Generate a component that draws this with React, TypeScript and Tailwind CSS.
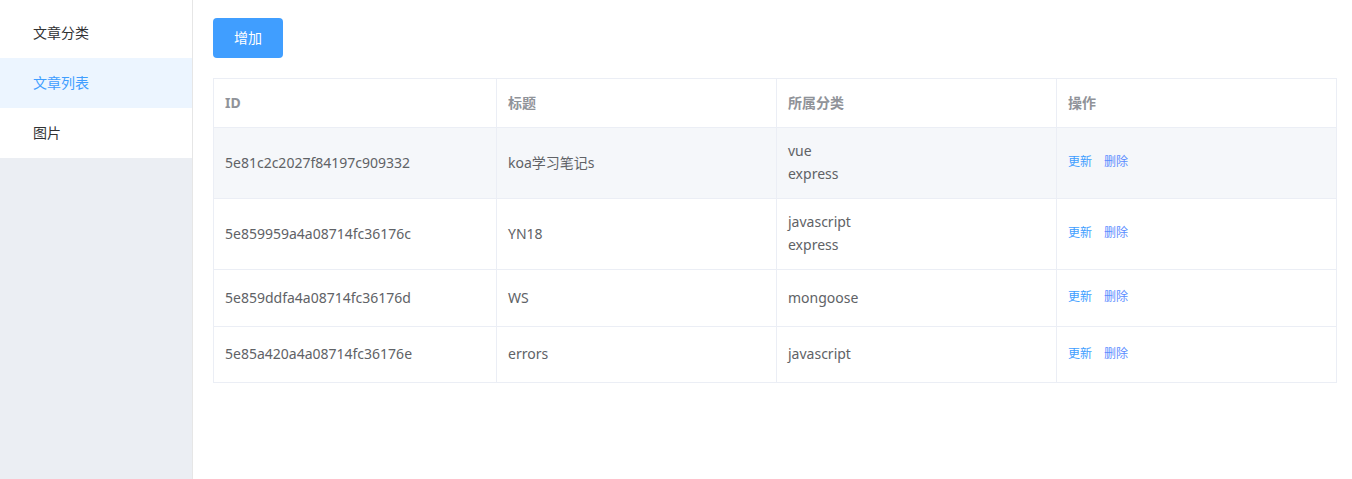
import React from "react";

const rows = [
  { id: "5e81c2c2027f84197c909332", title: "koa学习笔记s", cats: ["vue", "express"], h: "h-[71px]", bg: "bg-[#f5f7fa]" },
  { id: "5e859959a4a08714fc36176c", title: "YN18", cats: ["javascript", "express"], h: "h-[71px]", bg: "bg-white" },
  { id: "5e859ddfa4a08714fc36176d", title: "WS", cats: ["mongoose"], h: "h-[57px]", bg: "bg-white" },
  { id: "5e85a420a4a08714fc36176e", title: "errors", cats: ["javascript"], h: "h-[55px]", bg: "bg-white" },
];

const font = { fontFamily: '"Noto Sans", "Noto Sans CJK SC", sans-serif' };

export default function App() {
  return (
    <div className="flex h-[479px] w-[1352px] bg-white" style={font}>
      <aside className="flex w-[193px] shrink-0 flex-col border-r border-[#e6e6e6] bg-[#ebeef3]">
        <div className="bg-white pt-[8px]">
          <div className="flex h-[50px] items-center pb-[2px] pl-[33px] text-[14px] text-[#303133]">文章分类</div>
          <div className="flex h-[50px] items-center bg-[#ecf5ff] pb-[2px] pl-[33px] text-[14px] text-[#409eff]">文章列表</div>
          <div className="flex h-[50px] items-center pb-[2px] pl-[33px] text-[14px] text-[#303133]">图片</div>
        </div>
      </aside>
      <main className="flex-1 pl-[20px] pr-[15px] pt-[18px]">
        <button className="flex h-[40px] w-[70px] items-center justify-center rounded-[4px] bg-[#409eff] pb-[2px] text-[14px] text-white">
          增加
        </button>
        <div className="mt-[20px] border border-[#ebeef5]">
          <div className="grid h-[49px] grid-cols-[283px_280px_280px_1fr] border-b border-[#ebeef5] text-[14px] font-bold text-[#909399]">
            <div className="flex items-center border-r border-[#ebeef5] pb-[2px] pl-[11px]">ID</div>
            <div className="flex items-center border-r border-[#ebeef5] pb-[2px] pl-[11px]">标题</div>
            <div className="flex items-center border-r border-[#ebeef5] pb-[2px] pl-[11px]">所属分类</div>
            <div className="flex items-center pb-[2px] pl-[11px]">操作</div>
          </div>
          {rows.map((r, i) => (
            <div
              key={r.id}
              className={`grid grid-cols-[283px_280px_280px_1fr] text-[14px] text-[#606266] ${r.h} ${r.bg} ${i < rows.length - 1 ? "border-b border-[#ebeef5]" : ""}`}
            >
              <div className="flex items-center border-r border-[#ebeef5] pb-[2px] pl-[11px]">{r.id}</div>
              <div className="flex items-center border-r border-[#ebeef5] pb-[2px] pl-[11px]">{r.title}</div>
              <div className="flex flex-col justify-center border-r border-[#ebeef5] pb-[2px] pl-[11px] leading-[23px]">
                {r.cats.map((c) => (
                  <span key={c}>{c}</span>
                ))}
              </div>
              <div className="flex items-center gap-[12px] pb-[2px] pl-[11px] text-[12px]">
                <span className="text-[#409eff]">更新</span>
                <span className="text-[#5b8cff]">删除</span>
              </div>
            </div>
          ))}
        </div>
      </main>
    </div>
  );
}
